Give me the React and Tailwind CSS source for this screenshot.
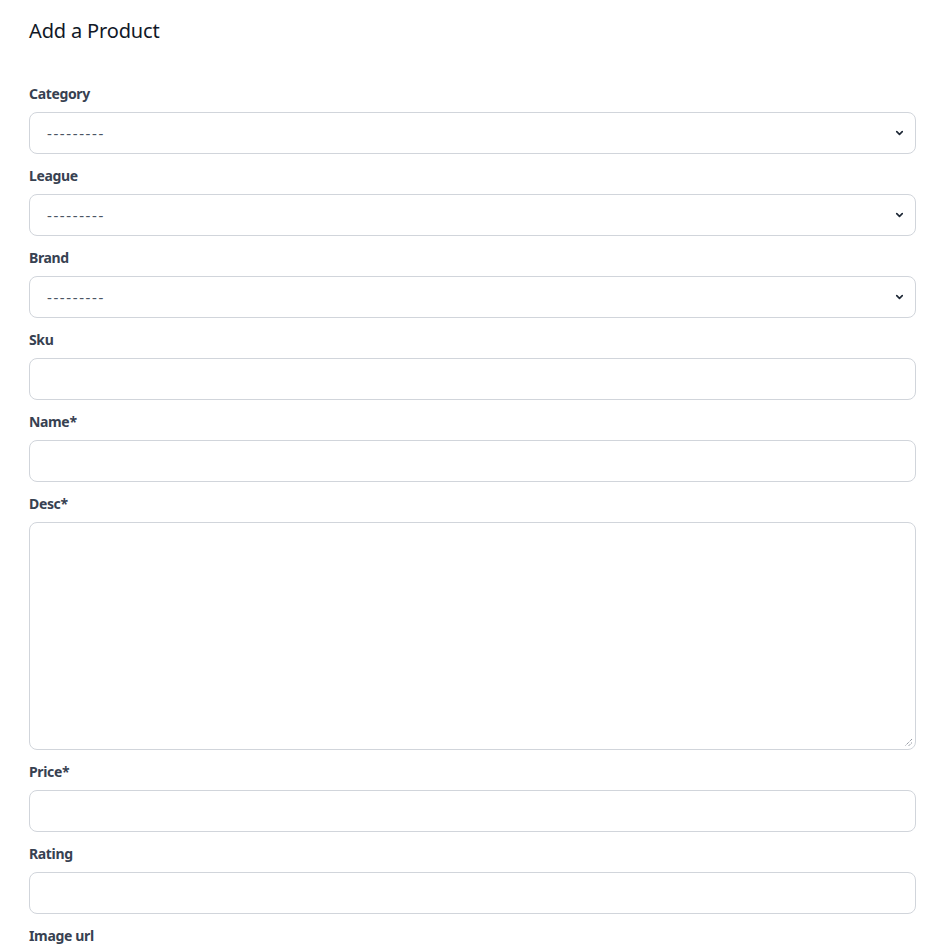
import React from "react";

const Chevron = () => (
  <svg className="pointer-events-none absolute right-[11px] top-1/2 -translate-y-1/2" width="11" height="11" viewBox="0 0 20 20" fill="none">
    <path d="M5 7.5l5 5 5-5" stroke="#1f2937" strokeWidth="3" strokeLinecap="round" strokeLinejoin="round" />
  </svg>
);

function Label({ children }) {
  return (
    <label className="block text-[14px] leading-[20px] font-bold text-[#374151] tracking-[-0.35px] mb-[8px]">{children}</label>
  );
}

function SelectField({ label }) {
  return (
    <div className="mb-[12px]">
      <Label>{label}</Label>
      <div className="relative">
        <div className="h-[42px] w-full rounded-[8px] border border-[#d1d5db] bg-white pl-[17px] flex items-center text-[15px] text-[#4b5563] tracking-[1.6px]">
          ---------
        </div>
        <Chevron />
      </div>
    </div>
  );
}

function InputField({ label }) {
  return (
    <div className="mb-[12px]">
      <Label>{label}</Label>
      <div className="h-[42px] w-full rounded-[8px] border border-[#d1d5db] bg-white" />
    </div>
  );
}

export default function App() {
  return (
    <div className="min-h-screen bg-white font-['Noto_Sans',sans-serif] pl-[29px] pr-[22px] pt-[17px]">
      <h1 className="text-[20px] leading-[28px] text-[#111827] font-normal tracking-[-0.15px] mb-[39px]">Add a Product</h1>
      <SelectField label="Category" />
      <SelectField label="League" />
      <SelectField label="Brand" />
      <InputField label="Sku" />
      <InputField label="Name*" />
      <div className="mb-[12px]">
        <Label>Desc*</Label>
        <div className="relative h-[228px] w-full rounded-[8px] border border-[#d1d5db] bg-white">
          <svg className="absolute right-[2px] bottom-[2px]" width="9" height="9" viewBox="0 0 9 9">
            <path d="M8 1L1 8M8 4.5L4.5 8" stroke="#6b7280" strokeWidth="1" strokeDasharray="1 1" />
          </svg>
        </div>
      </div>
      <InputField label="Price*" />
      <InputField label="Rating" />
      <div className="mb-[12px]">
        <Label>Image url</Label>
        <div className="h-[42px] w-full rounded-[8px] border border-[#d1d5db] bg-white" />
      </div>
    </div>
  );
}
